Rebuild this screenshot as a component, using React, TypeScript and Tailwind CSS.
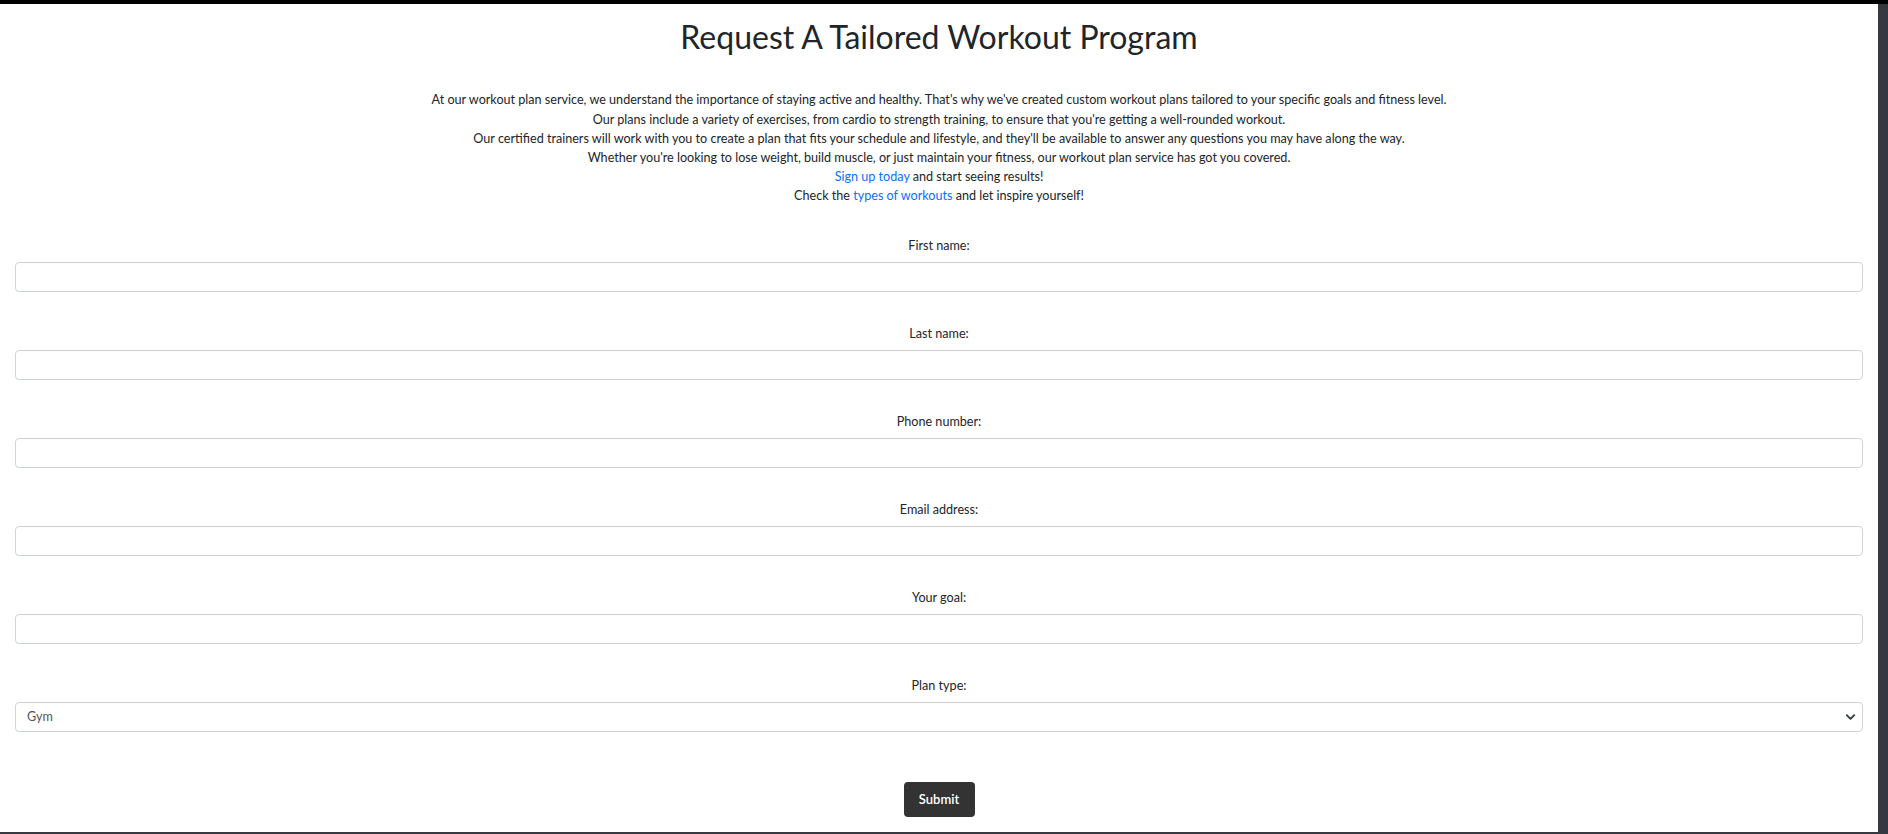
import React from "react";

const fields = [
  { id: "firstName", label: "First name:", type: "text" },
  { id: "lastName", label: "Last name:", type: "text" },
  { id: "phone", label: "Phone number:", type: "tel" },
  { id: "email", label: "Email address:", type: "email" },
  { id: "goal", label: "Your goal:", type: "text" },
];

export default function App() {
  return (
    <div className="h-[834px] w-full overflow-hidden bg-[#363a40] border-t-4 border-black font-['Lato','Liberation_Sans',sans-serif] text-[#212529]">
      <div className="w-[1878px] h-[828px] bg-white overflow-hidden">
        <h1 className="mt-[14px] text-center text-[32px] leading-[1.2] font-normal">
          Request A Tailored Workout Program
        </h1>

        <div className="mt-[34px] text-center text-[12.6px] leading-[19.2px]">
          <p>
            At our workout plan service, we understand the importance of staying active and healthy. That's why we've
            created custom workout plans tailored to your specific goals and fitness level.
          </p>
          <p>
            Our plans include a variety of exercises, from cardio to strength training, to ensure that you're getting a
            well-rounded workout.
          </p>
          <p>
            Our certified trainers will work with you to create a plan that fits your schedule and lifestyle, and
            they'll be available to answer any questions you may have along the way.
          </p>
          <p>
            Whether you're looking to lose weight, build muscle, or just maintain your fitness, our workout plan
            service has got you covered.
          </p>
          <p>
            <a href="#" className="text-[#0d6efd]">Sign up today</a> and start seeing results!
          </p>
          <p>
            Check the <a href="#" className="text-[#0d6efd]">types of workouts</a> and let inspire yourself!
          </p>
        </div>

        <form className="mt-[30px] px-[15px] text-center text-[12.6px] leading-[19.2px]">
          {fields.map((f) => (
            <div key={f.id} className="mb-[31.8px]">
              <label htmlFor={f.id} className="block mb-[7px]">
                {f.label}
              </label>
              <input
                id={f.id}
                type={f.type}
                className="block w-full h-[30px] rounded-[4px] border border-[#ced4da] bg-white px-[10px] outline-none"
              />
            </div>
          ))}

          <div className="mb-[50px]">
            <label htmlFor="plan" className="block mb-[7px]">
              Plan type:
            </label>
            <div className="relative">
              <select
                id="plan"
                defaultValue="gym"
                className="block w-full h-[30px] appearance-none rounded-[4px] border border-[#ced4da] bg-white pl-[11px] text-left text-[#555] outline-none"
              >
                <option value="gym">Gym</option>
                <option value="home">Home</option>
                <option value="outdoor">Outdoor</option>
              </select>
              <svg
                className="absolute right-[6px] top-[10px] w-[13px] h-[10px] pointer-events-none"
                viewBox="0 0 16 16"
                fill="none"
                stroke="#343a40"
                strokeWidth="3"
                strokeLinecap="round"
                strokeLinejoin="round"
              >
                <path d="M2 5l6 6 6-6" />
              </svg>
            </div>
          </div>

          <button
            type="button"
            className="h-[35px] w-[71px] rounded-[4px] bg-[#333] text-white text-[13px] font-semibold"
          >
            Submit
          </button>
        </form>
      </div>
    </div>
  );
}
